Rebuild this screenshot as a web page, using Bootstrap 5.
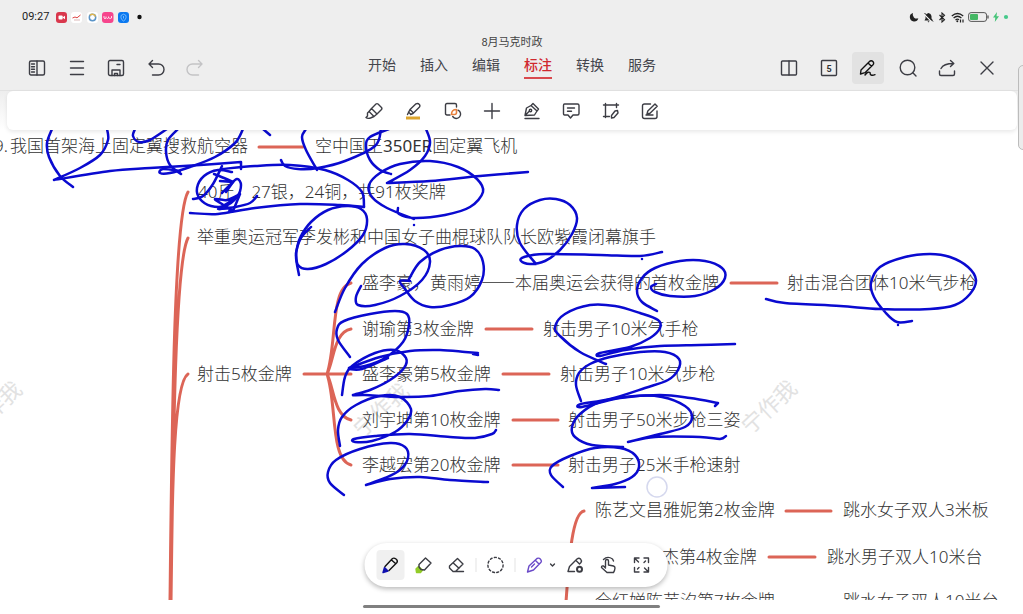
<!DOCTYPE html>
<html lang="zh-CN">
<head>
<meta charset="utf-8">
<meta name="viewport" content="width=device-width, initial-scale=1">
<title>8月马克时政</title>
<link href="https://cdn.jsdelivr.net/npm/bootstrap@5.3.0/dist/css/bootstrap.min.css" rel="stylesheet">
<style>
  body { font-family: Roboto, "Noto Sans CJK SC", sans-serif; background: #fff; color: #33343c; }
  svg { display: block; }
  .app-head { background: #eee; border-bottom: 1px solid #e2e2e2; }
  .status { height: 34px; padding: 0 14px 0 22px; font-size: 11px; line-height: 16px; color: #222; }
  .status-apps { gap: 4px; margin-left: 7px; }
  .status-sys { gap: 4px; }
  .menu-grid { display: grid; grid-template-columns: 1fr auto 1fr; height: 56px; padding: 0 20px 0 21px; }
  .tools-left { width: 190px; padding-top: 12px; }
  .tools-right { width: 230px; padding-top: 12px; }
  .ic { width: 32px; height: 32px; padding: 0; border: 0; border-radius: 4px; background: none; color: #3c3d44;
        display: flex; align-items: center; justify-content: center; flex: none; }
  .ic svg { fill: none; stroke: currentColor; stroke-width: 1.4; stroke-linecap: round; stroke-linejoin: round; }
  .ic.current { background: #e2e2e2; color: #111; }
  .ic:disabled { color: #c3c3c5; }
  .doc-name { font-size: 11px; line-height: 18px; margin: 0; font-weight: 400; color: #444; }
  .tabs { gap: 24px; }
  .tabs a { font-size: 14px; line-height: 24px; color: #44454c; text-decoration: none; border-bottom: 2px solid transparent; margin-top: 1px; }
  .tabs a.active { color: #d0282e; border-color: #d94a4e; font-weight: 500; }
  .tool-zone { background: linear-gradient(#eee, #fff); padding: 0 6px 0 7px; }
  .tool-card { height: 39px; background: #fff; border-radius: 6px; box-shadow: 0 2px 4px rgba(0,0,0,.09); position: relative; z-index: 1; }
  .tool-set { width: 308px; }
  .canvas { overflow: hidden; min-height: 0; }
  .topic { font-family: "Noto Sans", "Noto Sans CJK SC", sans-serif; font-size: 17px; font-weight: 300; fill: #333; }
  .dash { font-family: "Noto Sans CJK SC", sans-serif; }
  .wm { font-family: "Noto Sans CJK SC", sans-serif; font-size: 22px; fill: #e2e2e2; text-anchor: middle; }
  .branch { fill: none; stroke: #dc6557; stroke-width: 3; stroke-linecap: round; }
  .ink { fill: none; stroke: #0a0ad0; stroke-width: 2.5; stroke-linecap: round; stroke-linejoin: round; }
  .foot { height: 14px; padding-top: 5px; }
  .home-bar { width: 29%; height: 3px; background: #808080; border-radius: 2px; }
  .pen-bar { position: absolute; bottom: 27px; left: 50%; transform: translateX(-50%); height: 44px; width: 303px; margin-left: 4px; padding: 0 12px; gap: 5px;
             background: #fff; border-radius: 22px; box-shadow: 0 2px 5px rgba(0,0,0,.28); }
  .pen-bar .ic { width: 28px; height: 30px; }
  .pen-bar .ic.current { background: #f0f0f0; }
  .rule { width: 1px; height: 14px; background: #e4e4e4; flex: none; }
  .pen-bar .caret { width: 8px; }
  .side-grip { position: absolute; right: -6px; top: 65px; width: 11px; height: 85px; border: 1px solid #bcbcbc; border-radius: 5px; background: #ececec; z-index: 2; }
</style>
</head>
<body class="vh-100 d-flex flex-column overflow-hidden position-relative">
<header class="app-head">
  <div class="status d-flex align-items-center justify-content-between">
    <div class="d-flex align-items-center">
      <span>09:27</span>
      <div class="status-apps d-flex align-items-center">
        <svg width="11" height="11" viewBox="0 0 11 11"><rect width="11" height="11" rx="3" fill="#d9374c"/><rect x="2.5" y="3.4" width="4.2" height="4.2" rx="1" fill="#fff"/><path d="M6.5 5.5 9 3.7v3.6z" fill="#fff"/></svg>
        <svg width="12" height="11" viewBox="0 0 12 11"><rect width="11" height="11" rx="3" fill="#fff"/><path d="M1.500 6 4 5l2 .8L9.500 3" stroke="#d44" fill="none"/><path d="M3 8h6" stroke="#c99" stroke-width=".7"/></svg>
        <svg width="11" height="11" viewBox="0 0 11 11"><rect width="11" height="11" rx="3" fill="#fff"/><circle cx="5.500" cy="5.500" r="3.200" fill="none" stroke="#5a94c8" stroke-width="1.500"/><path d="M3 3.500A3.200 3.200 0 0 1 8.500 4.500" fill="none" stroke="#e3b64a" stroke-width="1.500"/></svg>
        <svg width="12" height="11" viewBox="0 0 12 11"><rect width="11.500" height="11" rx="3" fill="#f6458c"/><path d="M2 4v2q1 1.500 2 0V4.500M4.500 6q1 1 2 0V4.500M7 6q1 1 2.500 0V4" stroke="#fff" stroke-width=".8" fill="none"/></svg>
        <svg width="11" height="11" viewBox="0 0 11 11"><rect width="11" height="11" rx="3" fill="#0a78f0"/><path d="M3 3.500 5.500 2.200 8 3.500v2.300Q7.500 8 5.500 9 3.500 8 3 5.800zM5.500 4v2.500" stroke="#8cc8ff" stroke-width=".8" fill="none"/></svg>
        <svg width="12" height="6" viewBox="0 0 12 6"><circle cx="6.500" cy="3" r="2.200" fill="#111"/></svg>
      </div>
    </div>
    <div class="status-sys d-flex align-items-center">
      <svg width="10" height="10" viewBox="0 0 10 10"><path d="M4 1A4.300 4.300 0 1 0 9.300 6.200 4 4 0 0 1 4 1z" fill="#222"/></svg>
      <svg width="11" height="11" viewBox="0 0 11 11"><path d="M1.500 8.500 2.500 6.500V4Q3 1.500 5.500 1 8 1.500 8.500 4v2.500l1.500 2zM4.500 9.200h2L5.500 10.500z" fill="#222"/><path d="M1 2 9.500 10.500" stroke="#eee" stroke-width="1.200"/><path d="M1.500 1 10 9.500" stroke="#222"/></svg>
      <svg width="9" height="11" viewBox="1 0 9 11"><path d="M2.500 3 7.500 7.800 5 10V1l2.500 2.200L2.500 8" fill="none" stroke="#222" stroke-width="1.100"/></svg>
      <svg width="13" height="11" viewBox="0 0 13 11"><path d="M.8 4Q6.500-1 12.200 4M2.600 6q3.900-3.400 7.800 0M4.500 8q2-1.600 3.500-.2" fill="none" stroke="#222" stroke-width="1.300"/><circle cx="6.300" cy="9.300" r="1" fill="#222"/><path d="M9.500 7.500v3M12 7.500v3" stroke="#222" stroke-width="1.200"/></svg>
      <svg width="21" height="10" viewBox="0 0 21 10"><rect x=".6" y=".6" width="18" height="8.800" rx="2.500" fill="none" stroke="#555"/><rect x="2" y="2" width="8" height="6" rx="1" fill="#45b865"/><path d="M20 3.500v3" stroke="#555" stroke-width="1.300"/></svg>
      <svg width="6" height="10" viewBox="0 0 6 10"><path d="M4 0 0 5.500h2.300L1.800 10 6 4.200H3.500z" fill="#45c477"/></svg>
      <svg width="6" height="6" viewBox="2 0 6 6"><circle cx="5" cy="3" r="2.100" fill="#45c98a"/></svg>
    </div>
  </div>
  <div class="menu-grid">
    <div class="tools-left d-flex justify-content-between align-items-center">
      <button class="ic" aria-label="目录"><svg width="18" height="18" viewBox="0 0 18 18"><rect x="1.500" y="2" width="15" height="14" rx="1.500"/><path d="M9 2v14M3.500 5H6.500M3.500 7.700H6.500M3.500 10.300H6.500M3.500 13H6.500"/></svg></button>
      <button class="ic" aria-label="菜单"><svg width="18" height="18" viewBox="0 0 18 18"><path d="M2.500 2.500h13M2.500 9h13M2.500 15.500h13"/></svg></button>
      <button class="ic" aria-label="保存"><svg width="18" height="18" viewBox="0 0 18 18"><rect x="1.500" y="1.500" width="15" height="15" rx="1.500"/><path d="M5 16.500v-5.500h8v5.500M7.500 16.500v-2h3v2M10 5.500h3"/></svg></button>
      <button class="ic" aria-label="撤销"><svg width="18" height="18" viewBox="0 0 18 18"><path d="M5.500 1.500 2 5l3.500 3.500M2 5h9.500a5.500 5.500 0 0 1 0 11H5.500"/></svg></button>
      <button class="ic" aria-label="重做" disabled><svg width="18" height="18" viewBox="0 0 18 18"><path d="M12.500 1.500 16 5l-3.500 3.500M16 5H6.500a5.500 5.500 0 0 0 0 11h6"/></svg></button>
    </div>
    <div class="d-flex flex-column align-items-center">
      <h1 class="doc-name">8月马克时政</h1>
      <nav class="tabs d-flex">
        <a href="#">开始</a><a href="#">插入</a><a href="#">编辑</a><a href="#" class="active" aria-current="page">标注</a><a href="#">转换</a><a href="#">服务</a>
      </nav>
    </div>
    <div class="tools-right ms-auto d-flex justify-content-between align-items-center">
      <button class="ic" aria-label="分屏"><svg width="18" height="18" viewBox="0 0 18 18"><rect x="1.500" y="2" width="15" height="14" rx="1"/><path d="M9 2v14"/></svg></button>
      <button class="ic" aria-label="页码"><svg width="18" height="18" viewBox="0 0 18 18"><rect x="1.500" y="1.500" width="15" height="15" rx="1"/><text x="9" y="12.500" text-anchor="middle" font-size="9" font-weight="700" fill="#333" stroke="none">5</text></svg></button>
      <button class="ic current" aria-label="手写"><svg width="18" height="18" viewBox="0 0 18 18"><path d="M2 11 10.500 2.500a2.400 2.400 0 0 1 3.500 3.300L6 13.700 1.500 15zM9 4l3.500 3.300M6 16q3-4 5-2.500 0 4 5 2.200"/></svg></button>
      <button class="ic" aria-label="搜索"><svg width="18" height="18" viewBox="0 0 18 18"><circle cx="8.500" cy="8.500" r="7.300"/><path d="M13.800 13.800 17 17"/></svg></button>
      <button class="ic" aria-label="分享"><svg width="18" height="18" viewBox="0 0 18 18"><path d="M1.500 12v3q0 1.500 1.500 1.500h12q1.500 0 1.500-1.500v-3M3 9.500Q5.500 4.500 15.500 4.500M12.500 1.500l3.300 3-3.300 3"/></svg></button>
      <button class="ic" aria-label="关闭"><svg width="18" height="18" viewBox="0 0 18 18"><path d="M3 3l12 12M15 3 3 15"/></svg></button>
    </div>
  </div>
</header>

<div class="tool-zone">
  <div class="tool-card d-flex justify-content-center align-items-center">
    <div class="tool-set d-flex justify-content-between">
      <button class="ic" aria-label="马克笔"><svg width="18" height="18" viewBox="0 0 18 18"><path d="M6.500 6.500 11 2q1-.8 2 0l3.500 3.500q.8 1 0 2L12 12zM6.500 6.500 4 9.500 9 14.500 12 12M4 9.500 2.500 11v3L1 15.500q1.500 1.500 4.500.5L9 14.500"/></svg></button>
      <button class="ic" aria-label="荧光笔"><svg width="18" height="18" viewBox="0 0 18 18"><path d="M2 16h14" stroke="#dca52e" stroke-width="3" stroke-linecap="butt"/><path d="M3.500 12.500 6 7.500 12 1.800q2-1 3.500.8 1 1.500-.5 3L9 11.500 6.500 12.500M6 7.500 9.500 11M4.500 10l2 2"/></svg></button>
      <button class="ic" aria-label="图形"><svg width="18" height="18" viewBox="0 0 18 18"><path d="M6 13H3Q1.500 13 1.500 11.500V3Q1.500 1.500 3 1.500h8Q12.500 1.500 12.500 3v2"/><path d="M14 8.200a4.300 4.300 0 1 1-5.300 6.300"/><path d="M7.500 12.500q0-5 5-5v3q0 2-2 2z" stroke="#e7803e" stroke-width="1.600"/></svg></button>
      <button class="ic" aria-label="添加"><svg width="18" height="18" viewBox="0 0 18 18"><path d="M9 1.500v15M1.500 9h15"/></svg></button>
      <button class="ic" aria-label="钢笔"><svg width="18" height="18" viewBox="0 0 18 18"><path d="M2 16.500h14M2 13.500 3.500 6 8 3.500 14 9l-2.500 4-9.500.5zM2.500 13l4-4M8.500 3 10 1.500 15.500 7 14 9"/><circle cx="7.500" cy="8.500" r="1.200"/></svg></button>
      <button class="ic" aria-label="批注"><svg width="18" height="18" viewBox="0 0 18 18"><path d="M2.500 2h13Q17 2 17 3.500v8q0 1.500-1.500 1.500H11l-2.500 3L6 13H2.500Q1.500 13 1.500 11.500v-8Q1.500 2 2.500 2zM5.500 6h7M5.500 9.300h4"/></svg></button>
      <button class="ic" aria-label="区域"><svg width="18" height="18" viewBox="0 0 18 18"><path d="M1.500 3h15M3.500 1.500v14M1.500 14.500h6M14.500 1.500v4M9.500 13.500 13 9l2.500-.5.5 2.500L12 15.500l-2.500.5z"/></svg></button>
      <button class="ic" aria-label="编辑批注"><svg width="18" height="18" viewBox="0 0 18 18"><path d="M9.500 2H3.500Q1.500 2 1.500 4v10.500q0 2 2 2H14q2 0 2-2V9M6 12l.8-3L14 2l2.200 2.300L9 11.200zM5 13h7"/></svg></button>
    </div>
  </div>
</div>

<main class="canvas flex-grow-1">
  <svg width="100%" height="100%" aria-label="思维导图">
    <g transform="translate(0,-130)">
      <g class="wm">
        <text transform="translate(-6,408) rotate(-43)" y="8">宁作我</text>
        <text transform="translate(381,410) rotate(-43)" y="8">宁作我</text>
        <text transform="translate(769,407) rotate(-43)" y="8">宁作我</text>
      </g>
      <g class="branch">
        <path d="M170 602C172 420 174 215 188 192M171 602C173 450 175 262 188 238M171 602C172 480 174 383 188 374"/>
        <path d="M304 374H329M329 374H351M327 374C337 345 330 288 351 283M327 374C334 360 334 332 351 329M327 374C334 388 334 416 351 420M327 374C337 403 330 460 351 465"/>
        <path d="M566 602C569 560 572 513 584 511"/>
        <path d="M259 147H303M731 283H777M486 329H532M503 374H549M513 420H558M513 465H558M786 511H831M769 557H815"/>
      </g>
      <g class="topic">
        <text x="-6" y="152">9.</text>
        <text x="10" y="152">我国首架海上固定翼搜救航空器</text>
        <text x="315" y="152">空中国王<tspan font-weight="400">350ER</tspan>固定翼飞机</text>
        <text x="198" y="198">40斤，27银，24铜，共91枚奖牌</text>
        <text x="197" y="243">举重奥运冠军李发彬和中国女子曲棍球队队长欧紫霞闭幕旗手</text>
        <text x="197" y="380">射击5枚金牌</text>
        <text x="362" y="289">盛李豪，黄雨婷<tspan class="dash">——</tspan>本届奥运会获得的首枚金牌</text>
        <text x="787" y="289">射击混合团体10米气步枪</text>
        <text x="362" y="335">谢瑜第3枚金牌</text>
        <text x="543" y="335">射击男子10米气手枪</text>
        <text x="362" y="380">盛李豪第5枚金牌</text>
        <text x="560" y="380">射击男子10米气步枪</text>
        <text x="362" y="426">刘宇坤第10枚金牌</text>
        <text x="568" y="426">射击男子50米步枪三姿</text>
        <text x="362" y="471">李越宏第20枚金牌</text>
        <text x="568" y="471">射击男子25米手枪速射</text>
        <text x="595" y="516">陈艺文昌雅妮第2枚金牌</text>
        <text x="843" y="516">跳水女子双人3米板</text>
        <text x="662" y="563">杰第4枚金牌</text>
        <text x="827" y="563">跳水男子双人10米台</text>
        <text x="595" y="607">全红婵陈芋汐第7枚金牌</text>
        <text x="843" y="607">跳水女子双人10米台</text>
      </g>
      <g class="ink" id="ink"></g>
      <circle cx="657" cy="487" r="10" fill="#fff" fill-opacity=".5" stroke="#d5d8ee" stroke-width="1.500"/>
    </g>
  </svg>
</main>

<footer class="foot"><div class="home-bar mx-auto"></div></footer>

<div class="pen-bar d-flex align-items-center" role="toolbar" aria-label="画笔">
  <button class="ic current" aria-label="签字笔"><svg width="18" height="18" viewBox="0 0 18 18"><path d="M1.500 16.500 3 11.500 6.500 15z" fill="#1010b0" stroke="#1010b0"/><path d="M3.500 10.500 11 2.500q1.500-1 3.500.5t1 3.500L7.500 14.500M10 4l4 3.500"/></svg></button>
  <button class="ic" aria-label="荧光笔"><svg width="18" height="18" viewBox="0 0 18 18"><path d="M1.500 13 4 10.500 8 14l-2 2.500H2z" fill="#92cc28" stroke="#92cc28"/><path d="M4.500 8.500 11 2l5.500 5L10 14l-3.500-.5L4.500 11z"/></svg></button>
  <button class="ic" aria-label="橡皮"><svg width="18" height="18" viewBox="0 0 18 18"><path d="M2 10 10 2.500 15.500 8 8 15.500H5.500L2 12zM5.500 6.800l6 5.500M8 15.500h8"/></svg></button>
  <span class="rule"></span>
  <button class="ic" aria-label="套索"><svg width="18" height="18" viewBox="0 0 18 18"><circle cx="9" cy="9" r="7.600" stroke-dasharray="2 2.300"/></svg></button>
  <span class="rule"></span>
  <div class="d-flex">
    <button class="ic" aria-label="自定义笔"><svg width="18" height="18" viewBox="0 0 18 18" color="#6a4ac8"><path d="M2 16 3.500 10 11.500 2.500q2-1 3.500.8t.5 3L8 14zM10 4.500 13.500 8M6 11l3-3"/></svg></button>
    <button class="ic caret" aria-label="更多"><svg width="6" height="6" viewBox="0 0 6 6"><path d="M1 2l2 2 2-2"/></svg></button>
  </div>
  <button class="ic" aria-label="笔设置"><svg width="18" height="18" viewBox="0 0 18 18"><path d="M8 15.500H1.500L3 10.500 10.500 3q2-1.500 3.500 0t.5 3.500L13 8M9.500 4.500 13 8"/><circle cx="13" cy="13.300" r="2.500" stroke-width="2"/></svg></button>
  <button class="ic" aria-label="手势"><svg width="18" height="18" viewBox="0 0 18 18"><path d="M6 11V5q0-1.500 1.500-1.500T9 5v4l5 1q1.500.5 1.500 2-.3 3-1.500 4.500H7.500L2 11.500q0-2 2-1.500l2 2M4 3.500Q8-.5 13 3l1 2"/></svg></button>
  <button class="ic" aria-label="全屏"><svg width="18" height="18" viewBox="0 0 18 18"><path d="M2 6.500V2h4.500M11.500 2H16v4.500M16 11.500V16h-4.500M6.500 16H2v-4.500M2.500 2.500 6 6M15.500 15.500 12 12M11.500 6.500 13 5M5 13l1.500-1.500"/></svg></button>
</div>
<div class="side-grip"></div>

<script>
  // Pen strokes: each line is a list of x,y points; "/" marks a sharp turn within a stroke.
  const strokes = [
    "52,129 47,143 49,157 60,176 73,187",
    "107,129 108,140 100,155 80,168 54,180 / 54,180 110,171 150,168 200,165 241,162 / 241,162 241,169",
    "135,129 133,136 139,142 150,140 167,129",
    "178,129 168,140 166,152 170,165 181,174",
    "243,129 235,143 215,157 190,167 170,173 160,173 163,169 180,171",
    "263,129 270,135", "306,129 302,137 306,150 317,170",
    "381,129 375,146 345,161 318,168 298,169 285,166 281,160",
    "222,169 255,166 290,165 325,170 348,180 362,192 364,207",
    "190,213 218,214 255,208 300,204 340,205 364,207",
    "389,129 370,137 366,146 370,160 380,170 391,174",
    "426,129 430,142 425,156 410,170 387,183 / 387,183 430,181 480,176 528,172",
    "398,208 399,214 414,218 445,215 470,207 483,192 477,179 458,167 430,161 400,164 380,173 369,185 372,197 387,208 414,219",
    "414,225 414,225",
    "232,172 218,170 204,176 197,188 200,199 211,206 225,206 237,197 241,185 237,179 229,186 222,193",
    "222,166 213,184 203,196 193,199", "214,174 224,178 233,182 / 233,182 220,181", "233,182 226,192",
    "240,194 227,200 215,199 222,204 233,211 / 233,211 240,194 / 240,194 228,203 218,209 229,208 229,212",
    "257,196 250,203 235,207 219,209",
    "311,227 301,238 296,255 299,275",
    "296,253 298,265 308,269 326,264 347,251 363,235 367,219 361,209 347,206 328,210 311,222 300,238 296,253",
    "536,264 520,243 517,225 524,209 540,200 556,199 570,205 577,218 572,234 560,250 545,261 530,264 521,261 524,257 545,254 600,255 640,256 662,252",
    "642,259 642,259",
    "335,312 345,288 362,264 385,248 405,244 424,250 430,262 422,280 400,296 375,305 358,305 356,297 361,286",
    "409,279 420,262 440,250 460,246 475,249 483,262 482,280 470,297 450,305 430,307 415,301 405,289 400,281 410,281",
    "350,357 338,340 337,329 344,321 370,314 395,311 407,314 409,325 403,342 385,358 365,366 349,368 / 349,368 380,357 410,351 440,350 465,352 478,353 / 478,355 473,354",
    "342,395 345,377 352,366 375,353 395,350 406,358 404,368 390,380 370,390 353,395 365,395 400,397 430,396 460,391 485,389 499,390",
    "349,369 362,369 388,358",
    "340,446 338,430 342,417 356,405 380,396 400,397 411,409 407,421 395,432 372,441 355,442 354,439 375,436 410,434 450,437 475,438 492,434 496,430",
    "344,495 330,483 328,472 336,460 360,449 390,443 405,447 408,458 400,470 385,478 366,485 / 366,485 390,479 420,477 450,480 488,482",
    "657,311 642,302 637,291 642,278 655,268 680,261 705,261 722,268 725,278 715,289 695,296 670,296 655,292 651,287 656,284",
    "606,364 580,352 560,336 555,327 565,314 590,305 615,306 640,313 658,320 660,328 650,338 630,347 600,353 600,356 625,350 660,346 700,345 735,344",
    "581,401 576,385 579,373 590,364 610,357 640,352 665,352 679,359 678,370 668,380 645,388 610,399 581,404 582,407 620,398 660,395 690,398 718,403 / 718,403 715,406",
    "623,447 592,445 575,437 572,427 580,414 600,402 635,396 662,397 685,406 692,417 685,427 660,434 628,442 / 628,442 655,437 700,437 720,439 726,436",
    "563,487 551,475 552,466 570,456 595,448 620,448 635,455 639,467 632,477 615,484 592,488 / 592,488 625,487",
    "766,299 785,303 840,306 880,309 930,309 955,305 970,294 976,280 968,267 950,257 930,254 905,257 880,267 871,283 874,297 885,312 897,322 912,321",
    "898,325 898,325"
  ];
  const smooth = part => {
    const p = part.trim().split(/\s+/).map(s => s.split(",").map(Number));
    let d = "M" + p[0];
    for (let i = 0; i < p.length - 1; i++) {
      const a = p[i - 1] || p[i], b = p[i], c = p[i + 1], e = p[i + 2] || c;
      d += `C${b[0] + (c[0] - a[0]) / 6} ${b[1] + (c[1] - a[1]) / 6} ${c[0] - (e[0] - b[0]) / 6} ${c[1] - (e[1] - b[1]) / 6} ${c[0]} ${c[1]}`;
    }
    return d;
  };
  document.getElementById("ink").innerHTML =
    strokes.map(s => `<path d="${s.split("/").map(smooth).join("")}"/>`).join("");
</script>
<script src="https://cdn.jsdelivr.net/npm/bootstrap@5.3.0/dist/js/bootstrap.bundle.min.js"></script>
</body>
</html>
